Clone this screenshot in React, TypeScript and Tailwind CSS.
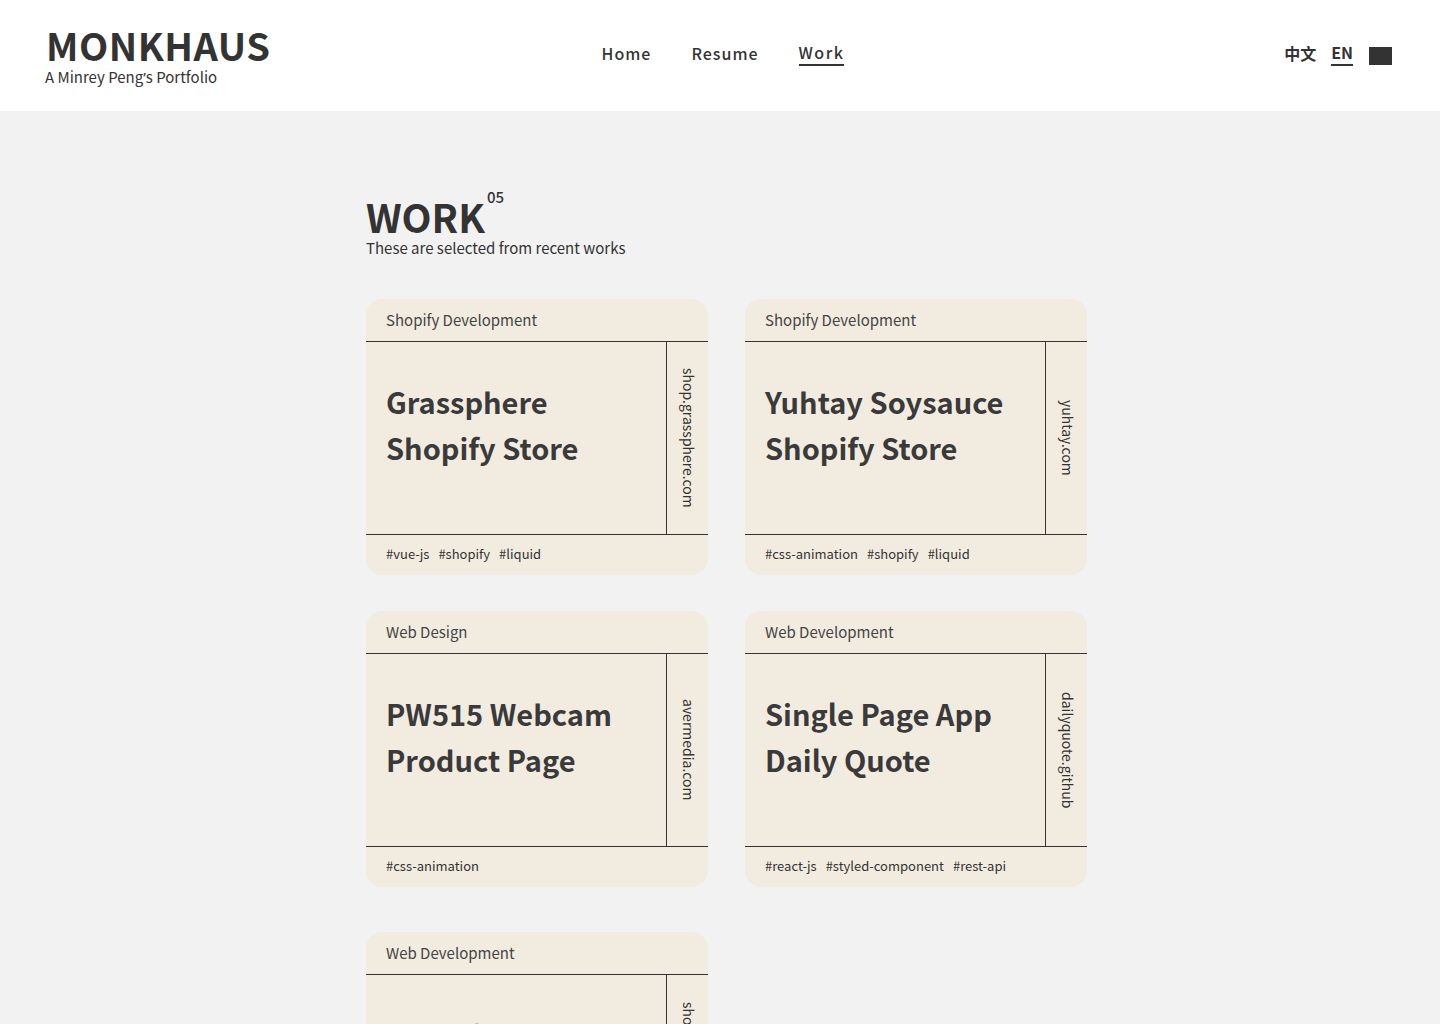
const works = [
  {
    category: "Shopify Development",
    title: ["Grassphere", "Shopify Store"],
    site: "shop.grassphere.com",
    tags: ["#vue-js", "#shopify", "#liquid"],
  },
  {
    category: "Shopify Development",
    title: ["Yuhtay Soysauce", "Shopify Store"],
    site: "yuhtay.com",
    tags: ["#css-animation", "#shopify", "#liquid"],
  },
  {
    category: "Web Design",
    title: ["PW515 Webcam", "Product Page"],
    site: "avermedia.com",
    tags: ["#css-animation"],
  },
  {
    category: "Web Development",
    title: ["Single Page App", "Daily Quote"],
    site: "dailyquote.github",
    tags: ["#react-js", "#styled-component", "#rest-api"],
  },
  {
    category: "Web Development",
    title: ["Shopify Theme", "Landing Page"],
    site: "shop.monkhaus.com",
    tags: ["#html", "#scss"],
  },
];

function WorkCard({ work, className = "" }: { work: (typeof works)[number]; className?: string }) {
  return (
    <div className={"w-[342px] rounded-[16px] bg-[#f2ece0] text-[#333] " + className}>
      <div className="h-[42px] px-5 pt-[10px] text-[15px] leading-[22px] text-[#444]">
        {work.category}
      </div>
      <div className="flex h-[194px] border-y border-[#333]">
        <div className="flex-1 px-5 pt-[36px] text-[29px] font-bold leading-[46px] text-[#3a3a3a]">
          {work.title.map((line) => (
            <div key={line}>{line}</div>
          ))}
        </div>
        <div className="flex w-[42px] items-center justify-center border-l border-[#333] pl-[3px]">
          <span className="text-[14px] leading-none [writing-mode:vertical-rl]">{work.site}</span>
        </div>
      </div>
      <div className="flex h-[40px] items-center gap-[9px] px-5 pb-[2px] text-[13px]">
        {work.tags.map((t) => (
          <span key={t}>{t}</span>
        ))}
      </div>
    </div>
  );
}

export default function App() {
  return (
    <div className="min-h-screen bg-[#f2f2f2] font-['Noto_Sans_CJK_TC','Noto_Sans',sans-serif] text-[#333]">
      <header className="flex h-[111px] items-start justify-between bg-white pl-[46px] pr-[48px] pt-[22px]">
        <div className="w-[300px]">
          <div className="text-[38px] font-bold leading-[46px] tracking-[0.5px] text-[#333]">MONKHAUS</div>
          <div className="-ml-px -mt-[1px] text-[15px] leading-[20px] text-[#333]">
            A Minrey Peng<span className="font-['Noto_Sans',sans-serif]">’</span>s Portfolio
          </div>
        </div>
        <nav className="flex gap-[40px] pl-[8px] pt-[18px] text-[16px] font-medium tracking-[1px]">
          <a className="leading-[26px]">Home</a>
          <a className="leading-[26px]">Resume</a>
          <a className="border-b-2 border-[#333] leading-[24px] tracking-[1.5px]">Work</a>
        </nav>
        <div className="flex w-[300px] justify-end gap-[15px] pt-[18px] text-[16px] font-bold">
          <a className="leading-[26px]">中文</a>
          <a className="border-b-2 border-[#333] leading-[24px]">EN</a>
          <span className="ml-[1px] mt-[7px] h-[18px] w-[23px] bg-[#333]" />
        </div>
      </header>

      <main className="pl-[366px] pt-[84px]">
        <div className="flex items-start">
          <h1 className="-mt-[3px] text-[39px] font-bold leading-[48px]">WORK</h1>
          <span className="-mt-[9px] ml-[2px] text-[15px] font-medium">05</span>
        </div>
        <p className="-mt-[2px] text-[15px] leading-[20px]">These are selected from recent works</p>

        <div className="mt-[41px] grid w-[721px] grid-cols-[342px_342px] gap-x-[37px] gap-y-[36px] pb-10">
          {works.map((w, i) => (
            <WorkCard key={i} work={w} className={i === 4 ? "mt-[9px]" : ""} />
          ))}
        </div>
      </main>
    </div>
  );
}
